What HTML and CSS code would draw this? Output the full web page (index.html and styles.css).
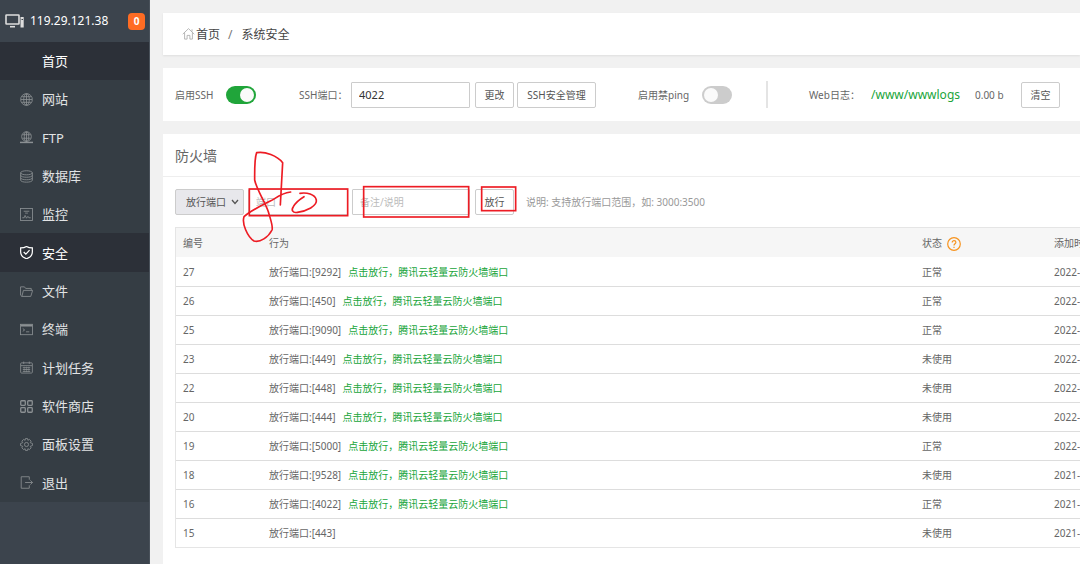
FILE: index.html
```
<!DOCTYPE html>
<html lang="zh-CN">
<head>
<meta charset="utf-8">
<title>系统安全</title>
<link rel="stylesheet" href="styles.css">
</head>
<body>
<div class="app">
  <aside class="sidebar">
    <header class="host">
      <svg class="host-icon" viewBox="0 0 19 14" fill="none" stroke="currentColor" stroke-width="1.6"><rect x="1" y="1" width="13" height="9" rx=".5"/><path d="M5 12.700h5"/><rect x="15.500" y="3" width="3.200" height="10.500" fill="currentColor" stroke="none"/><path d="M16.500 5.500h1.500" stroke="#3c444d" stroke-width="1"/></svg>
      <span class="host-ip">119.29.121.38</span>
      <span class="badge">0</span>
    </header>
    <nav>
      <ul class="menu">
        <li><a class="item active" href="#"><span class="icon"></span>首页</a></li>
        <li><a class="item" href="#"><svg class="icon" viewBox="0 0 14 14"><circle cx="7" cy="7" r="6.300"/><ellipse cx="7" cy="7" rx="3" ry="6.300"/><path d="M7 1v12M1 7h12M2 4h10M2 10h10"/></svg>网站</a></li>
        <li><a class="item" href="#"><svg class="icon" viewBox="0 0 14 14"><circle cx="7" cy="6" r="5.200"/><ellipse cx="7" cy="6" rx="2.400" ry="5.200"/><path d="M7 1v11M2.500 4h9M2.500 7.800h9"/><path d="M0 12.300h14" stroke-width="1.600"/></svg>FTP</a></li>
        <li><a class="item" href="#"><svg class="icon" viewBox="0 0 14 14"><ellipse cx="7" cy="3" rx="6.300" ry="2.200"/><path d="M.7 3v8c0 2.800 12.600 2.800 12.600 0V3M.7 5.700c0 2.800 12.600 2.800 12.600 0M.7 8.400c0 2.800 12.600 2.800 12.600 0"/></svg>数据库</a></li>
        <li><a class="item" href="#"><svg class="icon" viewBox="0 0 14 14"><rect x=".6" y=".6" width="12.800" height="12.800"/><path d="M4 3.500h6M5.500 5.500h3M2.500 10.500h2l1-2.500 1.500 3 1.500-2 1 1.500h2"/></svg>监控</a></li>
        <li><a class="item active" href="#"><svg class="icon" viewBox="0 0 14 14"><path d="M7 .5c2 1.300 4.200 1.600 6.300 1.600v4.400c0 3.500-2.500 5.900-6.300 7.200-3.800-1.300-6.300-3.700-6.300-7.200V2.100C2.800 2.100 5 1.800 7 .5zM4 6.500l2.300 2.300 4-4.300" stroke-width="1.300"/></svg>安全</a></li>
        <li><a class="item" href="#"><svg class="icon" viewBox="0 0 14 14"><path d="M2 12.300L.6 11V2h4.200l1.300 1.700h6v2M2 12.300l1.700-6.500h9.900l-2 6.500z"/></svg>文件</a></li>
        <li><a class="item" href="#"><svg class="icon" viewBox="0 0 14 14"><rect x=".6" y="1.400" width="12.800" height="11.200"/><path d="M.8 2.700h12.400" stroke-width="2.200"/><path d="M3 6l2 1.500L3 9M6.500 9.500H10"/></svg>终端</a></li>
        <li><a class="item" href="#"><svg class="icon" viewBox="0 0 14 14"><rect x=".7" y="2" width="12.600" height="11" rx="1"/><path d="M4 .6v2.600M10 .6v2.600M1 5h12M3 7.200h8M3 9.200h8M3 11.200h8"/><path d="M4.500 6v6M7 6v6M9.500 6v6" stroke-width=".5"/></svg>计划任务</a></li>
        <li><a class="item" href="#"><svg class="icon" viewBox="0 0 14 14"><g stroke-width="1.400"><rect x=".8" y=".8" width="4.900" height="4.900" rx=".8"/><rect x="8.300" y=".8" width="4.900" height="4.900" rx=".8"/><rect x=".8" y="8.300" width="4.900" height="4.900" rx=".8"/><rect x="8.300" y="8.300" width="4.900" height="4.900" rx=".8"/></g></svg>软件商店</a></li>
        <li><a class="item" href="#"><svg class="icon" viewBox="0 0 14 14"><circle cx="7" cy="7" r="2.200"/><path d="M5.900.6h2.200l.4 1.900 1.600-1 1.900 1.900-1 1.600 2.400.9v2.200l-2.400.9 1 1.600-1.900 1.900-1.600-1-.4 1.900H5.900l-.4-1.900-1.600 1L2 10.600 3 9 .6 8.100V5.900L3 5 2 3.400l1.900-1.900 1.600 1z"/></svg>面板设置</a></li>
        <li><a class="item" href="#"><svg class="icon" viewBox="0 0 14 14"><path d="M10 4V.8H1.300v12.400H10V10M5.500 7h8M11.200 4.700L13.500 7l-2.300 2.300"/></svg>退出</a></li>
      </ul>
    </nav>
  </aside>

  <main class="content">
    <nav class="panel breadcrumb">
      <svg class="home" viewBox="0 0 14 14"><path d="M.8 7.200L7 1.200l6.200 6M2.800 5.500v7h2.700V8.500h3v4h2.700v-7M10.800 2v2.500"/></svg>
      <a href="#">首页</a><span class="slash">/</span><span>系统安全</span>
    </nav>

    <section class="panel controls">
      <div class="group group-ssh">
        <label class="label-ssh" for="ssh">启用SSH</label>
        <input class="switch" id="ssh" type="checkbox" checked>
      </div>
      <div class="group group-port">
        <label class="label-port" for="ssh-port">SSH端口：</label>
        <input class="field field-port" id="ssh-port" type="text" value="4022">
        <button class="btn" type="button">更改</button>
        <button class="btn btn-wide" type="button">SSH安全管理</button>
      </div>
      <div class="group group-ping">
        <label class="label-ping" for="ping">启用禁ping</label>
        <input class="switch" id="ping" type="checkbox">
      </div>
      <div class="group group-log">
        <span class="label-log">Web日志：</span>
        <a class="log-path" href="#">/www/wwwlogs</a>
        <span class="log-size">0.00 b</span>
        <button class="btn" type="button">清空</button>
      </div>
    </section>

    <section class="panel firewall">
      <h1 class="title">防火墙</h1>
      <form class="toolbar">
        <div class="select-wrap">
          <select class="select" aria-label="类型"><option>放行端口</option></select>
          <svg class="chevron" viewBox="0 0 8 6"><path d="M1 1l3 3.500L7 1"/></svg>
        </div>
        <input class="field field-range" type="text" placeholder="端口" aria-label="端口">
        <input class="field field-note" type="text" placeholder="备注/说明" aria-label="备注/说明">
        <button class="btn" type="button">放行</button>
        <span class="hint">说明: 支持放行端口范围，如: 3000:3500</span>
      </form>
      <div class="table-wrap">
        <table class="rules">
          <colgroup><col class="col-id"><col><col class="col-state"><col class="col-time"></colgroup>
          <thead><tr><th>编号</th><th>行为</th><th>状态<span class="help"><svg viewBox="0 0 14 14"><circle cx="7" cy="7" r="6.300"/><path d="M5.200 5.500c0-2.500 3.700-2.300 3.700-.2C8.900 6.800 7 6.700 7 8.500M7 9.700v1.200"/></svg></span></th><th>添加时间</th></tr></thead>
          <tbody>
            <tr><td>27</td><td>放行端口:[9292]<a href="#">点击放行，腾讯云轻量云防火墙端口</a></td><td>正常</td><td>2022-</td></tr>
            <tr><td>26</td><td>放行端口:[450]<a href="#">点击放行，腾讯云轻量云防火墙端口</a></td><td>正常</td><td>2022-</td></tr>
            <tr><td>25</td><td>放行端口:[9090]<a href="#">点击放行，腾讯云轻量云防火墙端口</a></td><td>正常</td><td>2022-</td></tr>
            <tr><td>23</td><td>放行端口:[449]<a href="#">点击放行，腾讯云轻量云防火墙端口</a></td><td>未使用</td><td>2022-</td></tr>
            <tr><td>22</td><td>放行端口:[448]<a href="#">点击放行，腾讯云轻量云防火墙端口</a></td><td>未使用</td><td>2022-</td></tr>
            <tr><td>20</td><td>放行端口:[444]<a href="#">点击放行，腾讯云轻量云防火墙端口</a></td><td>未使用</td><td>2022-</td></tr>
            <tr><td>19</td><td>放行端口:[5000]<a href="#">点击放行，腾讯云轻量云防火墙端口</a></td><td>正常</td><td>2022-</td></tr>
            <tr><td>18</td><td>放行端口:[9528]<a href="#">点击放行，腾讯云轻量云防火墙端口</a></td><td>未使用</td><td>2021-</td></tr>
            <tr><td>16</td><td>放行端口:[4022]<a href="#">点击放行，腾讯云轻量云防火墙端口</a></td><td>正常</td><td>2021-</td></tr>
            <tr><td>15</td><td>放行端口:[443]</td><td>未使用</td><td>2021-</td></tr>
          </tbody>
        </table>
      </div>
      <svg class="marks" viewBox="9 12 1140 390">
        <rect x="268" y="177" width="295" height="80"/>
        <rect x="611" y="170" width="315" height="91"/>
        <rect x="965" y="171" width="102" height="71"/>
        <path d="M361 225L368 98C352 78 315 63 290 68C283 85 284 130 284 150C290 180 315 215 325 245C332 270 340 290 336 300C325 322 300 338 282 333C262 320 245 280 252 260C275 238 330 215 345 205C360 195 378 188 392 186"/>
        <path d="M420 190C440 187 465 192 469 210C472 228 440 243 412 247C398 250 393 240 400 230C408 215 422 206 432 200"/>
      </svg>
    </section>
  </main>
</div>
</body>
</html>
```
FILE: styles.css
```
* { box-sizing: border-box; }

body {
  margin: 0;
  background: #f1f1f1;
  color: #666;
  font: 10px/16px "Noto Sans", "Noto Sans CJK SC", sans-serif;
}

a { color: inherit; text-decoration: none; }
button, input, select { font: inherit; color: inherit; }

.app { display: flex; min-height: 100vh; overflow: hidden; }

/* Sidebar */
.sidebar {
  flex: 0 0 150px;
  background: #3c444d;
  border-right: 1px solid #4a525b;
  color: #e2e4e5;
}
.host { display: flex; align-items: center; height: 42px; padding: 0 4px 0 5px; }
.host-icon { width: 19px; height: 14px; margin-right: 6px; color: #ddd; }
.host-ip { flex: 1; font-size: 12px; color: #fff; }
.badge {
  width: 17px;
  height: 17px;
  border-radius: 4px;
  background: #ff6c23;
  color: #fff;
  font-weight: 700;
  line-height: 17px;
  text-align: center;
}
.menu { margin: 0; padding: 0; list-style: none; background: #353d44; }
.item {
  display: flex;
  align-items: center;
  gap: 9px;
  height: 38px;
  padding-left: 20px;
  font-size: 13px;
}
.menu li:nth-child(3n) .item { height: 39px; }
.item.active { background: #2c3038; color: #fff; }
.icon { width: 13px; height: 13px; fill: none; stroke: #8b9093; stroke-width: 0.9; }
.active .icon { stroke: #fff; }

/* Content */
.content {
  flex: 1;
  min-width: 0;
  display: flex;
  flex-direction: column;
  gap: 13px;
  padding: 13px 0 0 13px;
}
.panel { background: #fff; }

.breadcrumb {
  display: flex;
  align-items: center;
  height: 42px;
  padding: 2px 0 0 19px;
  color: #444;
  font-size: 12px;
  box-shadow: 0 1px 2px rgba(0, 0, 0, 0.08);
}
.home { width: 13px; height: 14px; margin: 0 1px 2px 0; fill: none; stroke: #aaa; stroke-width: 0.9; }
.slash { margin: 0 9px 0 8px; color: #777; }

.controls { display: flex; align-items: center; height: 53px; padding-left: 12px; white-space: nowrap; }
.group { display: flex; align-items: center; }
.group-ssh { flex: 0 0 124px; }
.group-port { flex: 0 0 339px; }
.group-ping { flex: 0 0 128px; }
.group-log { height: 27px; padding-left: 41px; border-left: 2px solid #e4e4e4; }
.label-ssh { width: 51px; }
.label-port { width: 52px; }
.label-ping { width: 64px; }
.label-log { width: 62px; }
.log-path { width: 104px; color: #20a53a; font-size: 12px; }
.log-size { width: 46px; }

.switch {
  appearance: none;
  display: flex;
  width: 30px;
  height: 18px;
  margin: 0;
  padding: 2px;
  border-radius: 9px;
  background: #ccc;
}
.switch::before { content: ""; width: 14px; height: 14px; border-radius: 50%; background: #fafafa; }
.switch:checked { justify-content: flex-end; background: #20a53a; }

.field { height: 26px; padding: 0 7px; border: 1px solid #ccc; border-radius: 1px; background: #fff; outline: 0; }
.field::placeholder { color: #bbb; opacity: 1; }
.field-port { width: 119px; color: #333; font-size: 11px; }
.field-range { width: 100px; margin-left: 4px; }
.field-note { width: 118px; margin-left: 4px; }

.btn {
  width: 39px;
  height: 26px;
  margin: 0;
  padding: 0;
  border: 1px solid #ccc;
  border-radius: 2px;
  background: #fff;
  color: #555;
}
.field + .btn { margin-left: 5px; }
.btn-wide { width: 79px; margin-left: 3px; }

/* Firewall */
.firewall { position: relative; flex: 1; padding-bottom: 15px; }
.title {
  height: 43px;
  margin: 0;
  padding-left: 12px;
  border-bottom: 1px solid #eee;
  font-size: 14px;
  font-weight: 400;
  line-height: 44px;
}
.toolbar { display: flex; align-items: center; padding: 12px 0 12px 12px; white-space: nowrap; }
.select-wrap { display: grid; align-items: center; width: 69px; }
.select {
  grid-area: 1 / 1;
  appearance: none;
  width: 100%;
  height: 26px;
  padding: 0 10px;
  border: 1px solid #ccc;
  border-radius: 2px;
  background: #e8e8ec;
  color: #555;
}
.chevron {
  grid-area: 1 / 1;
  justify-self: end;
  width: 8px;
  height: 6px;
  margin-right: 5px;
  fill: none;
  stroke: #555;
  stroke-width: 1.3;
  pointer-events: none;
}
.hint { margin-left: 12px; color: #999; }

.table-wrap { margin-left: 12px; overflow: hidden; border: 1px solid #e5e5e5; border-right: 0; }
.rules { width: 100%; table-layout: fixed; border-collapse: collapse; white-space: nowrap; }
.col-id { width: 86px; }
.col-state { width: 132px; }
.col-time { width: 33px; }
.rules th, .rules td { height: 29px; padding: 1px 0 0 7px; text-align: left; }
.rules th { background: #f6f6f6; font-weight: 400; }
.rules tbody tr + tr td { border-top: 1px solid #ddd; }
.rules td a { margin-left: 7px; color: #20a53a; }
.help { display: inline-flex; margin-left: 5px; vertical-align: middle; }
.help svg { width: 14px; height: 14px; fill: none; stroke: #f7931e; stroke-width: 1.2; }

/* Pen marks over the toolbar */
.marks {
  position: absolute;
  top: 0;
  left: 0;
  width: 380px;
  height: 130px;
  fill: none;
  stroke: #ed1c24;
  stroke-width: 5;
  stroke-linecap: round;
  pointer-events: none;
}
```
